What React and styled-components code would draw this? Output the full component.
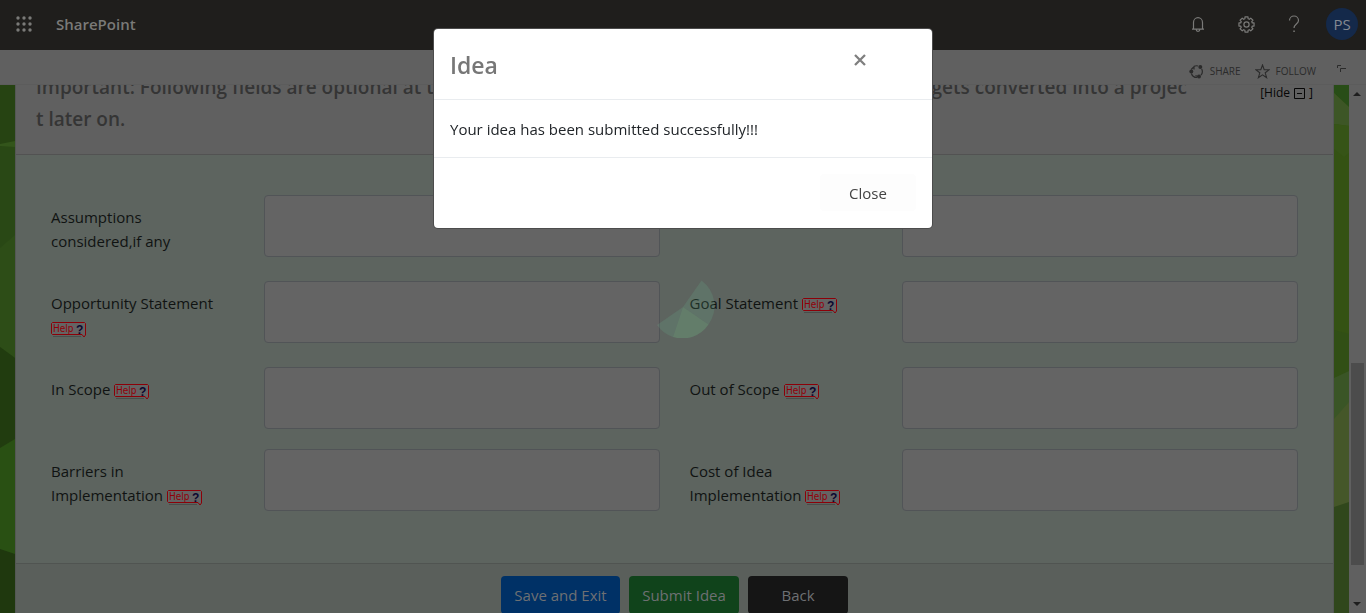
import React from "react";
import styled, { createGlobalStyle } from "styled-components";

const Global = createGlobalStyle`
  * { box-sizing: border-box; }
  body {
    margin: 0;
    overflow: hidden;
    background: #606060;
    color: #101312;
    font: 15px/24px "Open Sans", "Noto Sans", sans-serif;
  }
  button, textarea { font: inherit; margin: 0; }
`;

const Page = styled.div`
  display: flex;
  flex-direction: column;
  height: 100vh;
`;

/* Suite bar */
const SuiteBar = styled.header`
  display: flex;
  align-items: center;
  flex: none;
  height: 50px;
  padding-bottom: 2px;
  background: #1f1e1c;
  color: #7a7a78;
`;
const SuiteButton = styled.button`
  display: flex;
  align-items: center;
  justify-content: center;
  width: 48px;
  height: 48px;
  padding: 0;
  border: 0;
  background: none;
  color: inherit;
`;
const Brand = styled.a`
  margin-left: 8px;
  margin-right: auto;
  color: inherit;
  font-size: 15px;
  font-weight: 600;
  text-decoration: none;
`;
const Avatar = styled.span`
  width: 32px;
  border-radius: 50%;
  background: #14294a;
  color: #858a92;
  font-size: 15px;
  line-height: 32px;
`;

/* Ribbon */
const Ribbon = styled.div`
  display: flex;
  align-items: center;
  justify-content: flex-end;
  gap: 14px;
  flex: none;
  height: 35px;
  padding: 8px 19px 0 0;
  border-bottom: 1px solid #5c5c5c;
`;
const RibbonButton = styled.button`
  display: flex;
  align-items: center;
  gap: 6px;
  padding: 0;
  border: 0;
  background: none;
  color: #2b2b2b;
  font-size: 10px;
  line-height: 16px;
`;
const FocusButton = styled(RibbonButton)`
  margin: 0 0 6px 6px;
`;

/* Work area */
const Work = styled.div`
  display: flex;
  flex: 1;
  min-height: 0;
  overflow: hidden;
`;
const Strip = styled.svg`
  flex: none;
  width: 15px;
  height: 100%;
`;
const Panel = styled.main`
  flex: 1;
  height: 544px;
  border: solid #535754;
  border-width: 0 1px;
  background: #5a5f5b;
`;
const PanelHead = styled.div`
  display: flex;
  justify-content: space-between;
  align-items: flex-start;
  height: 70px;
  padding: 0 20px;
  border-bottom: 1px solid #525252;
  background: #606060;
`;
const Notice = styled.h2`
  flex: 1;
  max-width: 1151px;
  margin: -14px 0 0;
  color: #353535;
  font-size: 19px;
  font-weight: 600;
  line-height: 32px;
`;
const NoticeLine = styled.span`
  display: flex;
  justify-content: space-between;
  white-space: nowrap;
`;
const HideLink = styled.a`
  display: flex;
  align-items: center;
  gap: 4px;
  color: #060606;
  font-size: 12px;
  line-height: 16px;
  text-decoration: none;
`;
const Form = styled.form`
  background: #5d645f;
`;
const Fields = styled.div`
  display: flex;
  flex-direction: column;
  padding: 40px 20px 52px;
  border-bottom: 1px solid #505451;
`;
const Row = styled.div`
  display: grid;
  grid-template-columns: 2fr 4fr 2fr 4fr;
  margin-bottom: ${(p) => p.$gap || 0}px;
`;
const LabelCell = styled.div`
  padding: 10px 15px 0;
`;
const InputCell = styled.div`
  padding: 0 15px;
`;
const Box = styled.textarea`
  display: block;
  width: 100%;
  height: 62px;
  padding: 6px 12px;
  border: 1px solid #515457;
  border-radius: 4px;
  background: #646464;
  resize: none;
`;
const Help = styled.svg`
  vertical-align: -5px;
`;
const Actions = styled.div`
  display: flex;
  justify-content: center;
  gap: 9px;
  padding: 12px 0;
  background: #5a5f5b;
`;
const Action = styled.button`
  min-width: ${(p) => p.$width}px;
  height: 38px;
  padding: 0 12px;
  border: 0;
  border-radius: 4px;
  background: ${(p) => p.$color};
  color: #6e7073;
`;

const ScrollTrack = styled.div`
  display: flex;
  flex-direction: column;
  align-items: center;
  flex: none;
  width: 17px;
  padding: 6px 2px 6px 1px;
  background: #606060;
`;
const ScrollSpace = styled.div`
  flex: ${(p) => p.$share};
  width: 13px;
  background: ${(p) => p.$color || "none"};
`;

/* Loading wheel and dialog */
const Wheel = styled.svg`
  position: fixed;
  left: 50%;
  top: 50%;
  margin: -33px 0 0 -32px;
  pointer-events: none;
`;
const Dialog = styled.section`
  position: fixed;
  top: 29px;
  left: 50%;
  width: 498px;
  margin-left: -249px;
  border-radius: 4px;
  background: #fff;
  box-shadow: 0 0 0 1px #4c4c4c;
`;
const DialogHead = styled.div`
  display: flex;
  justify-content: space-between;
  align-items: flex-start;
  height: 71px;
  padding: 16px 62px 0 16px;
  border-bottom: 1px solid #e9ecef;
`;
const DialogTitle = styled.h3`
  margin: 0;
  color: #777;
  font-size: 23px;
  font-weight: 600;
  line-height: 40px;
`;
const Dismiss = styled.button`
  display: flex;
  margin-top: 5px;
  padding: 4px;
  border: 0;
  background: none;
`;
const DialogBody = styled.p`
  height: 58px;
  margin: 0;
  padding: 17px 16px;
  border-bottom: 1px solid #e9ecef;
  color: #212529;
`;
const DialogFoot = styled.div`
  display: flex;
  justify-content: flex-end;
  padding: 16px 16px 17px;
`;
const CloseButton = styled.button`
  width: 96px;
  height: 37px;
  border: 0;
  border-radius: 4px;
  background: #fdfdfd;
  color: #444;
`;

const HelpMark = () => (
  <Help width="35" height="16" viewBox="0 0 35 16" role="img" aria-label="Help">
    <path d="M2 14.5h28" stroke="#4a4d4b" />
    <path d="M1.500 .5h32l1 1v11.500l-1.500 2-2-2.500H1.500l-1-1V1.500z" fill="#646464" stroke="#8c0008" />
    <text x="2" y="10" fontFamily="DejaVu Sans Condensed, Liberation Sans" fontSize="10" fill="#900008">Help</text>
    <text x="25" y="12" fontFamily="Liberation Sans" fontSize="12" fontWeight="700" fill="#0b0830">?</text>
  </Help>
);

const Field = ({ id, label, help = true }) => (
  <>
    <LabelCell>
      <label htmlFor={id}>{label}</label>
      {help && <> <HelpMark /></>}
    </LabelCell>
    <InputCell><Box id={id} /></InputCell>
  </>
);

const gearPath = () => {
  const pts = [];
  for (let i = 0; i < 8; i++) {
    const a = (i * Math.PI) / 4;
    [[-0.27, 6], [-0.2, 7.7], [0.2, 7.7], [0.27, 6]].forEach(([d, r]) =>
      pts.push(`${(8.5 + r * Math.sin(a + d)).toFixed(2)} ${(8.5 - r * Math.cos(a + d)).toFixed(2)}`)
    );
  }
  return `M${pts.join("L")}Z`;
};

export default function App() {
  return (
    <>
      <Global />
      <Page>
        <SuiteBar>
          <SuiteButton aria-label="App launcher">
            <svg width="18" height="18" viewBox="0 0 18 18" fill="currentColor">
              {[3, 9, 15].map((y) => [3, 9, 15].map((x) => <circle key={`${x}-${y}`} cx={x} cy={y} r="1.700" />))}
            </svg>
          </SuiteButton>
          <Brand href="#">SharePoint</Brand>
          <SuiteButton aria-label="Notifications">
            <svg width="16" height="18" viewBox="0 0 16 18" fill="none" stroke="currentColor" strokeWidth="1.200">
              <path d="M3.500 14V7.500a4.500 4.800 0 0 1 9 0V14M2 14.200h12M6.200 14.500a1.800 1.800 0 0 0 3.600 0" />
            </svg>
          </SuiteButton>
          <SuiteButton aria-label="Settings">
            <svg width="18" height="18" viewBox="-1 -1 18 18" fill="none" stroke="currentColor" strokeWidth="1.200" strokeLinejoin="round">
              <path d={gearPath()} />
              <circle cx="8.500" cy="8.500" r="2.600" />
            </svg>
          </SuiteButton>
          <SuiteButton aria-label="Help">
            <svg width="12" height="18" viewBox="0 0 12 18" fill="none" stroke="currentColor" strokeWidth="1.200">
              <path d="M1.500 5.500a4.500 4.500 0 0 1 9 0c0 3.300-4.500 3.700-4.500 7.500" />
              <path d="M5.300 16.300h1.500" strokeWidth="1.500" />
            </svg>
          </SuiteButton>
          <SuiteButton aria-label="Account"><Avatar>PS</Avatar></SuiteButton>
        </SuiteBar>

        <Ribbon>
          <RibbonButton>
            <svg width="15" height="15" viewBox="0 0 15 15" fill="none" stroke="currentColor" strokeWidth="1.200">
              <path d="M5 2.300a5.800 5.800 0 0 1 4-.3M12.700 5a5.800 5.800 0 0 1-.7 6.200M8 13.500a5.800 5.800 0 0 1-5.600-4" />
              <path d="M2.200 5.500l3-3M5 2v3.500M9.500 13l-3-1.500" />
              <g fill="currentColor" stroke="none">
                <circle cx="11.300" cy="3" r="2" />
                <circle cx="2.300" cy="7.500" r="2" />
                <circle cx="10" cy="12.500" r="2" />
              </g>
            </svg>
            SHARE
          </RibbonButton>
          <RibbonButton>
            <svg width="15" height="15" viewBox="0 0 15 15" fill="none" stroke="currentColor" strokeWidth="1.100">
              <path d="M7.500 1l1.700 4.600 5 .1-4 3.100 1.400 4.900-4.100-2.900-4.100 2.900 1.400-4.900-4-3.100 5-.1z" />
            </svg>
            FOLLOW
          </RibbonButton>
          <FocusButton aria-label="Focus on content">
            <svg width="11" height="9" viewBox="0 0 11 9" fill="none" stroke="currentColor">
              <path d="M1.500 4V1.500H5M4.500 8V4.500H10" />
            </svg>
          </FocusButton>
        </Ribbon>

        <Work>
          <Strip viewBox="0 0 15 528" preserveAspectRatio="none">
            <path fill="#264312" d="M0 0h15v60H0z" />
            <path fill="#294815" d="M0 60h15v213H0z" />
            <path fill="#33551b" d="M0 59l15-3v6L0 61z" />
            <path fill="#2d4d17" d="M0 163l15-13v123L0 262z" />
            <path fill="#213c0f" d="M0 262l15 11v90H0z" />
            <path fill="#295013" d="M0 363l15-9v115H0z" />
            <path fill="#1f380e" d="M0 464l15 5v59H0z" />
          </Strip>
          <Panel>
            <PanelHead>
              <Notice>
                <NoticeLine>
                  <span>Important: Following fields are optional at this</span>
                  <span>gets converted into a projec</span>
                </NoticeLine>
                <NoticeLine>t later on.</NoticeLine>
              </Notice>
              <HideLink href="#">
                <span>[Hide</span>
                <svg width="11" height="11" viewBox="0 0 11 11" fill="none" stroke="currentColor">
                  <path d="M.5 .5h10v10H.5zM3 5.500h5" />
                </svg>
                <span>]</span>
              </HideLink>
            </PanelHead>
            <Form onSubmit={(e) => e.preventDefault()}>
              <Fields>
                <Row $gap={24}>
                  <Field id="assumptions" label="Assumptions considered,if any" help={false} />
                  <LabelCell />
                  <InputCell><Box aria-label="Constraints" /></InputCell>
                </Row>
                <Row $gap={24}>
                  <Field id="opportunity" label="Opportunity Statement" />
                  <Field id="goal" label="Goal Statement" />
                </Row>
                <Row $gap={20}>
                  <Field id="in-scope" label="In Scope" />
                  <Field id="out-scope" label="Out of Scope" />
                </Row>
                <Row>
                  <Field id="barriers" label="Barriers in Implementation" />
                  <Field id="cost" label="Cost of Idea Implementation" />
                </Row>
              </Fields>
              <Actions>
                <Action $width={119} $color="#003166">Save and Exit</Action>
                <Action $width={110} $color="#10431b">Submit Idea</Action>
                <Action $width={100} $color="#151515">Back</Action>
              </Actions>
            </Form>
          </Panel>
          <Strip viewBox="0 0 15 528" preserveAspectRatio="none">
            <path fill="#345213" d="M0 0h15v293H0z" />
            <path fill="#284d17" d="M0 0h15v22L0 8z" />
            <path fill="#3d5626" d="M0 8l15 14v19L0 39z" />
            <path fill="#365417" d="M0 39l15 2v27l-5 4L0 64z" />
            <path fill="#314f15" d="M0 245l15 4v44H0z" />
            <path fill="#3a5526" d="M0 293l15-7v50H0z" />
            <path fill="#455729" d="M0 334l15-17v105H0z" />
            <path fill="#30471c" d="M0 422l15-5v111H0z" />
          </Strip>
          <ScrollTrack>
            <svg width="8" height="6" viewBox="0 0 8 6" fill="#1e1e1e"><path d="M0 5l4-4 4 4z" /></svg>
            <ScrollSpace $share={266} />
            <ScrollSpace $share={202} $color="#4c4c4c" />
            <ScrollSpace $share={36} />
            <svg width="8" height="6" viewBox="0 0 8 6" fill="#1e1e1e"><path d="M0 1l4 4 4-4z" /></svg>
          </ScrollTrack>
        </Work>
      </Page>

      <Wheel width="64" height="64" viewBox="0 0 64 64" aria-hidden="true">
        <g fill="#69bc94">
          <path fillOpacity=".17" d="M32 33L50.500 6.500A31.500 31.500 0 0 1 57.500 50.500z" />
          <path fill="#72bd8a" fillOpacity=".28" d="M32 33L57.500 50.500A31.500 31.500 0 0 1 22 63z" />
          <path fillOpacity=".17" d="M32 33L22 63A31.500 31.500 0 0 1 6 51z" />
        </g>
      </Wheel>

      <Dialog role="dialog" aria-labelledby="dialog-title">
        <DialogHead>
          <DialogTitle id="dialog-title">Idea</DialogTitle>
          <Dismiss aria-label="Dismiss">
            <svg width="12" height="12" viewBox="0 0 12 12" stroke="#7f7f7f" strokeWidth="2.300">
              <path d="M1 1l10 10M11 1L1 11" />
            </svg>
          </Dismiss>
        </DialogHead>
        <DialogBody>Your idea has been submitted successfully!!!</DialogBody>
        <DialogFoot><CloseButton>Close</CloseButton></DialogFoot>
      </Dialog>
    </>
  );
}
